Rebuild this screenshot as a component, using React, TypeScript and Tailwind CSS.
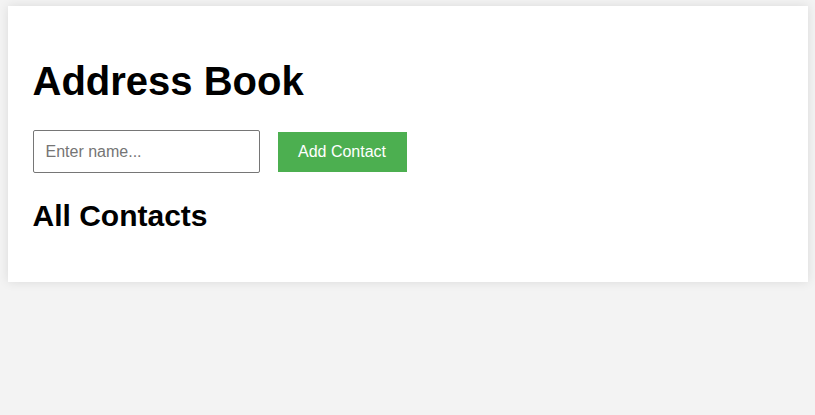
import React from 'react';

export default function App() {
  return (
    <div className="min-h-screen bg-[#f3f3f3] pt-[6px] font-['Liberation_Sans',Arial,sans-serif] text-black">
      <div className="mx-auto w-[800px] bg-white px-[25px] pt-[25px] pb-[25px] shadow-[0_0_10px_rgba(0,0,0,0.1)]">
        <h1 className="mt-[27px] mb-[26px] text-[40px] font-bold leading-[46px]">Address Book</h1>

        <div className="flex items-center gap-[18px]">
          <input
            type="text"
            placeholder="Enter name..."
            className="h-[43px] w-[227px] rounded-[2px] border border-[#767676] px-[12px] text-[16px] placeholder:text-[#757575]"
          />
          <button className="h-[40px] w-[129px] bg-[#4caf50] text-[16px] text-white">
            Add Contact
          </button>
        </div>

        <h2 className="mt-[26px] mb-[24px] text-[30px] font-bold leading-[34px]">All Contacts</h2>
      </div>
    </div>
  );
}
